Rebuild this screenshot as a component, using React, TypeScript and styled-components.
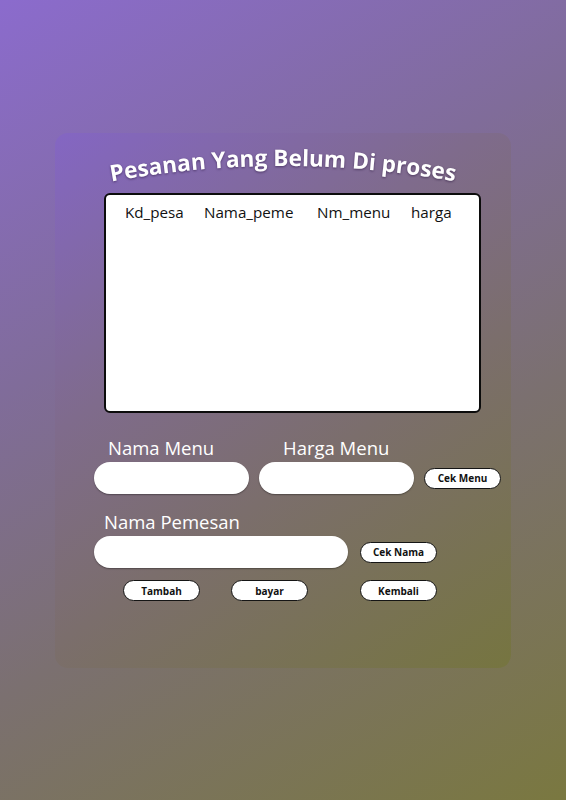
import styled, { createGlobalStyle } from 'styled-components';

const GlobalStyle = createGlobalStyle`
  html, body {
    margin: 0;
    padding: 0;
  }
  body {
    font-family: 'Open Sans', 'Noto Sans', sans-serif;
  }
`;

const Page = styled.div`
  width: 566px;
  height: 800px;
  box-sizing: border-box;
  padding: 133px 0 0 55px;
  background: linear-gradient(150deg, #8b6bcd 0%, #806c9a 35%, #7b7070 62%, #7a7840 100%);
  overflow: hidden;
`;

const Card = styled.section`
  width: 456px;
  height: 535px;
  box-sizing: border-box;
  padding: 12px 0 0 39px;
  border-radius: 13px;
  background: linear-gradient(145deg, #8466c3 0%, #7f6b8c 35%, #7b6e6c 60%, #767540 100%);
  display: flex;
  flex-direction: column;
`;

const TitleArt = styled.svg`
  display: block;
  width: 456px;
  height: 48px;
  margin-left: -39px;
  overflow: visible;
  text {
    font-family: 'Open Sans', sans-serif;
    font-weight: 700;
    font-size: 22.6px;
    fill: #ffffff;
    filter: drop-shadow(0 1px 1px rgba(40, 20, 60, 0.55));
  }
`;

const TableBox = styled.div`
  margin-left: 10px;
  width: 377px;
  height: 220px;
  box-sizing: border-box;
  background: #ffffff;
  border: 2px solid #0c0c0c;
  border-radius: 6px;
  padding: 7px 0 0 19px;
`;

const HeaderRow = styled.div`
  display: grid;
  grid-template-columns: 79px 113px 94px auto;
  font-size: 15.2px;
  line-height: 20px;
  color: #111;
`;

const Label = styled.div<{ $indent: number }>`
  padding-left: ${(p) => p.$indent}px;
  font-size: 18.5px;
  line-height: 24px;
  color: #ffffff;
`;

const LabelRow = styled.div`
  display: grid;
  grid-template-columns: 165px auto;
  margin-top: 23px;
`;

const FieldRow = styled.div<{ $gap: number }>`
  display: flex;
  align-items: center;
  gap: ${(p) => p.$gap}px;
  margin-top: 2px;
`;

const Pill = styled.input<{ $width: number }>`
  width: ${(p) => p.$width}px;
  height: 32px;
  box-sizing: border-box;
  border: none;
  border-radius: 16px;
  background: #ffffff;
  box-shadow: 0 1px 1.5px rgba(0, 0, 0, 0.35);
  outline: none;
  padding: 0 14px;
`;

const SmallButton = styled.button`
  width: 77px;
  height: 21px;
  box-sizing: border-box;
  border: 1.5px solid #151515;
  border-radius: 11px;
  background: #ffffff;
  font-family: 'Open Sans', sans-serif;
  font-weight: 700;
  font-size: 10px;
  color: #111;
  padding: 0;
  cursor: pointer;
`;

const PemesanLabel = styled(Label)`
  margin-top: 16px;
`;

const ActionRow = styled.div`
  display: grid;
  grid-template-columns: 108px 129px auto;
  margin: 12px 0 0 29px;
`;

const TitleArc = () => (
  <TitleArt viewBox="0 0 456 48">
    <defs>
      <path id="titleCurve" d="M 8 46.5 A 960 960 0 0 1 448 46.5" fill="none" />
    </defs>
    <text>
      <textPath href="#titleCurve" startOffset="50%" textAnchor="middle">
        Pesanan Yang Belum Di proses
      </textPath>
    </text>
  </TitleArt>
);

export default function App() {
  return (
    <>
      <GlobalStyle />
      <Page>
        <Card>
          <TitleArc />
          <TableBox>
            <HeaderRow>
              <span>Kd_pesa</span>
              <span>Nama_peme</span>
              <span>Nm_menu</span>
              <span>harga</span>
            </HeaderRow>
          </TableBox>

          <LabelRow>
            <Label $indent={14}>Nama Menu</Label>
            <Label $indent={24}>Harga Menu</Label>
          </LabelRow>
          <FieldRow $gap={10}>
            <Pill $width={155} />
            <Pill $width={155} />
            <SmallButton>Cek Menu</SmallButton>
          </FieldRow>

          <PemesanLabel $indent={10}>Nama Pemesan</PemesanLabel>
          <FieldRow $gap={12}>
            <Pill $width={254} />
            <SmallButton>Cek Nama</SmallButton>
          </FieldRow>

          <ActionRow>
            <SmallButton>Tambah</SmallButton>
            <SmallButton>bayar</SmallButton>
            <SmallButton>Kembali</SmallButton>
          </ActionRow>
        </Card>
      </Page>
    </>
  );
}
